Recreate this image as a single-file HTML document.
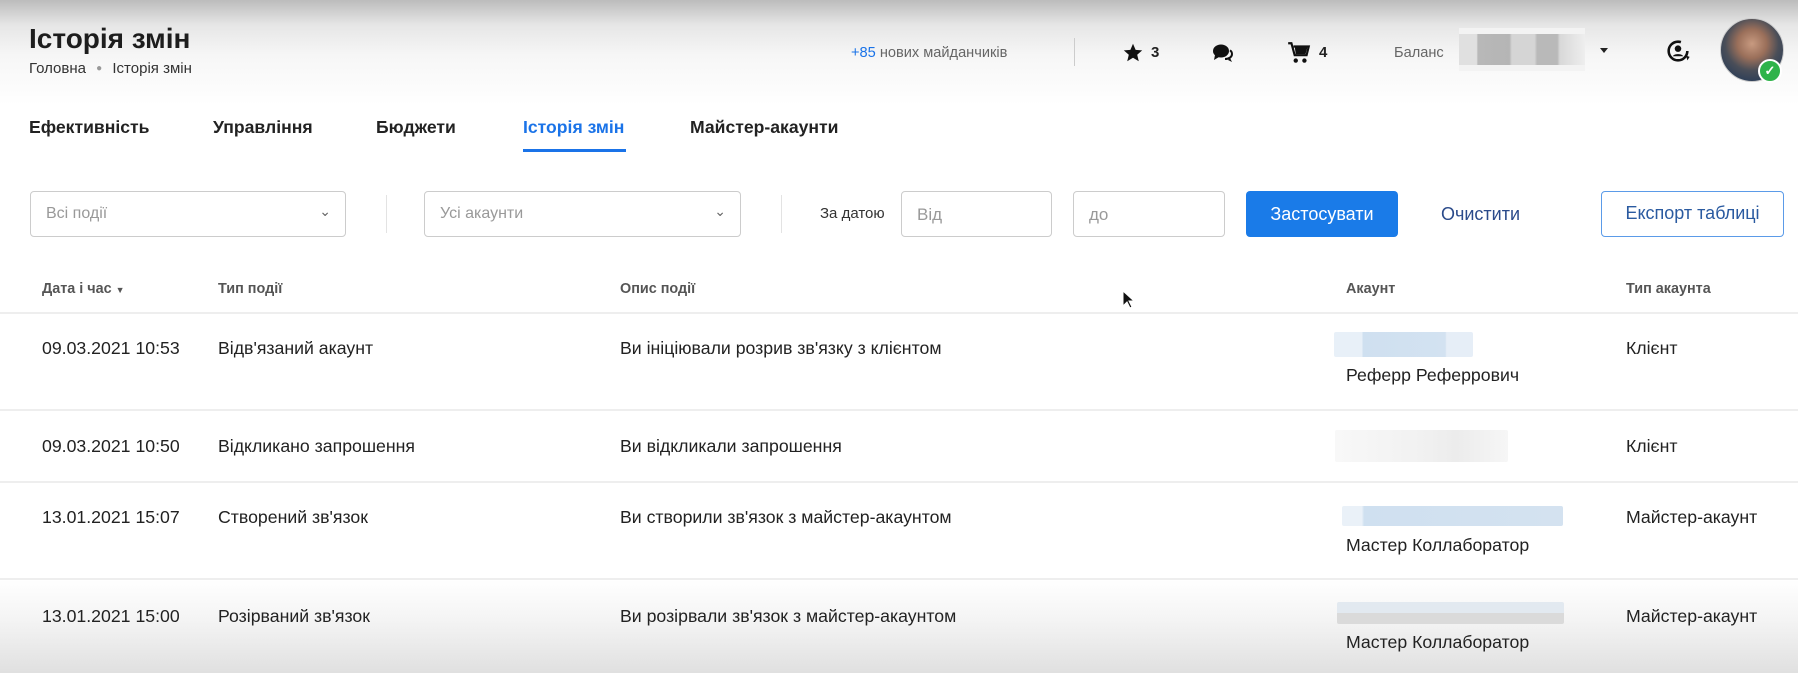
<!DOCTYPE html>
<html><head><meta charset="utf-8"><style>
*{margin:0;padding:0;box-sizing:border-box}
body{width:1798px;height:673px;overflow:hidden;position:relative;font-family:"Liberation Sans",sans-serif;color:#222;background:#fff}
.a{position:absolute;white-space:nowrap}
.topg{position:absolute;left:0;top:0;width:1798px;height:110px;background:linear-gradient(#bcbcbc 0,#e6e6e6 25px,#f6f6f6 55px,#fff 105px)}
.botg{position:absolute;left:0;top:580px;width:1798px;height:93px;background:linear-gradient(#fff 0,#f4f4f4 40px,#e0e0e0 93px)}
.tab{font-size:17.6px;font-weight:bold;top:117px}
.box{position:absolute;border:1px solid #ccc;border-radius:4px;background:#fff;top:191px;height:46px;font-size:16px;color:#999;padding:13px 15px 0}
.hd{font-size:14.4px;font-weight:bold;color:#555;top:281px}
.c{font-size:17.7px;color:#222}
.ln{position:absolute;left:0;width:1798px;height:2px;background:#eee}
.blur{position:absolute;border-radius:2px}
</style></head><body>
<div class="topg"></div>
<div class="botg"></div>
<div class="a" style="left:29px;top:23px;font-size:28px;font-weight:bold;color:#1d1d1d">Історія змін</div>
<div class="a" style="left:29px;top:60px;font-size:15px;color:#333">Головна <span style="color:#999;font-size:10px;margin:0 6px;vertical-align:2px">●</span> Історія змін</div>
<div class="a" style="left:851px;top:45px;font-size:14.6px;color:#666"><span style="color:#1a73e8">+85</span> нових майданчиків</div>
<div class="a" style="left:1074px;top:38px;width:1px;height:28px;background:#ccc"></div>
<svg class="a" style="left:1122px;top:42px" width="22" height="21" viewBox="0 0 24 24"><path d="M12 2l3 7 7.5.6-5.7 5 1.8 7.4L12 18l-6.6 4 1.8-7.4-5.7-5L9 9z" fill="#111"/></svg>
<div class="a" style="left:1151px;top:44px;font-size:15px;font-weight:bold">3</div>
<svg class="a" style="left:1211px;top:41px" width="24" height="24" viewBox="0 0 24 24"><ellipse cx="10" cy="10" rx="8" ry="6.5" fill="#111"/><path d="M4 14l-1 5 5-3z" fill="#111"/><path d="M14 18c4 0 7-2 7-5 0-1.5-.7-2.8-2-3.7" stroke="#111" stroke-width="2" fill="none"/><path d="M19 17l2 4-4-2z" fill="#111"/></svg>
<svg class="a" style="left:1286px;top:40px" width="26" height="26" viewBox="0 0 24 24"><path d="M2 3h3l3 11h11l2-8H7" stroke="#111" stroke-width="2" fill="none"/><path d="M8 6h12l-2 7H9z" fill="#111"/><circle cx="9" cy="19" r="2" fill="#111"/><circle cx="17" cy="19" r="2" fill="#111"/></svg>
<div class="a" style="left:1319px;top:44px;font-size:15px;font-weight:bold">4</div>
<div class="a" style="left:1394px;top:45px;font-size:14.6px;color:#666">Баланс</div>
<div class="a" style="left:1459px;top:28px;width:126px;height:43px;background:#f3f3f3"></div>
<div class="a" style="left:1459px;top:34px;width:126px;height:31px;background:linear-gradient(90deg,#e0e0e0 0,#e0e0e0 14%,#b8b8b8 15%,#b5b5b5 40%,#d5d5d5 42%,#d5d5d5 60%,#b9b9b9 62%,#b9b9b9 78%,#d8d8d8 80%,#eee 100%)"></div>
<div class="a" style="left:1600px;top:48px;border:4px solid transparent;border-top:5px solid #222"></div>
<svg class="a" style="left:1664px;top:37px" width="28" height="28" viewBox="0 0 24 24"><circle cx="12" cy="12" r="8" stroke="#111" stroke-width="2.2" fill="none" stroke-dasharray="40 10"/><circle cx="12" cy="10" r="2.8" fill="#111"/><path d="M7.5 16.5c1-2.5 8-2.5 9 0" fill="#111"/><path d="M19 16l3 1-2 3z" fill="#111"/></svg>
<div class="a" style="left:1720px;top:18px;width:64px;height:64px;border-radius:50%;background:radial-gradient(circle at 50% 40%,#c89a80 0,#9a6f5a 30%,#4a4e58 55%,#2c3e58 80%);border:1px solid #ccc"></div>
<div class="a" style="left:1758px;top:59px;width:24px;height:24px;border-radius:50%;background:#2fb34a;border:2px solid #fff;color:#fff;font-size:13px;text-align:center;line-height:20px;font-weight:bold">✓</div>
<div class="a tab" style="left:29px">Ефективність</div>
<div class="a tab" style="left:213px">Управління</div>
<div class="a tab" style="left:376px">Бюджети</div>
<div class="a tab" style="left:523px;color:#1a73e8">Історія змін</div>
<div class="a" style="left:523px;top:149px;width:103px;height:3px;background:#1a73e8"></div>
<div class="a tab" style="left:690px">Майстер-акаунти</div>
<div class="box" style="left:30px;width:316px">Всі події<span style="position:absolute;right:14px;top:11px;color:#666;font-size:14px">⌄</span></div>
<div class="a" style="left:386px;top:195px;width:1px;height:38px;background:#e3e3e3"></div>
<div class="box" style="left:424px;width:317px">Усі акаунти<span style="position:absolute;right:14px;top:11px;color:#666;font-size:14px">⌄</span></div>
<div class="a" style="left:781px;top:195px;width:1px;height:38px;background:#e3e3e3"></div>
<div class="a" style="left:820px;top:205px;font-size:15px;color:#333">За датою</div>
<div class="box" style="left:901px;width:151px;font-size:17px">Від</div>
<div class="box" style="left:1073px;width:152px;font-size:17px">до</div>
<div class="a" style="left:1246px;top:191px;width:152px;height:46px;background:#1a7be8;border-radius:4px;color:#fff;font-size:18px;text-align:center;line-height:46px">Застосувати</div>
<div class="a" style="left:1441px;top:204px;font-size:18px;color:#2a4a8a">Очистити</div>
<div class="a" style="left:1601px;top:191px;width:183px;height:46px;border:1.5px solid #5b9be8;border-radius:4px;color:#2a5aa0;font-size:18px;text-align:center;line-height:43px">Експорт таблиці</div>
<div class="a hd" style="left:42px">Дата і час <span style="font-size:9px">▼</span></div>
<div class="a hd" style="left:218px">Тип події</div>
<div class="a hd" style="left:620px">Опис події</div>
<div class="a hd" style="left:1346px">Акаунт</div>
<div class="a hd" style="left:1626px">Тип акаунта</div>
<svg class="a" style="left:1122px;top:290px" width="14" height="20" viewBox="0 0 14 20"><path d="M1 1v15l4-4 3 6 2-1-3-6h5z" fill="#111" stroke="#fff" stroke-width="1"/></svg>
<div class="ln" style="top:312px"></div>
<div class="a c" style="left:42px;top:338px">09.03.2021 10:53</div>
<div class="a c" style="left:218px;top:338px">Відв'язаний акаунт</div>
<div class="a c" style="left:620px;top:338px">Ви ініціювали розрив зв'язку з клієнтом</div>
<div class="blur" style="left:1334px;top:332px;width:139px;height:25px;background:linear-gradient(90deg,#e8f0f8 0,#e8f0f8 20%,#cfe0f0 21%,#d3e2f1 80%,#e6eef7 81%)"></div>
<div class="a c" style="left:1346px;top:365px">Реферр Реферрович</div>
<div class="a c" style="left:1626px;top:338px">Клієнт</div>
<div class="ln" style="top:409px"></div>
<div class="a c" style="left:42px;top:436px">09.03.2021 10:50</div>
<div class="a c" style="left:218px;top:436px">Відкликано запрошення</div>
<div class="a c" style="left:620px;top:436px">Ви відкликали запрошення</div>
<div class="blur" style="left:1335px;top:430px;width:173px;height:32px;background:linear-gradient(90deg,#f8f8f8,#f1f1f1 50%,#ececec 70%,#f6f6f6)"></div>
<div class="a c" style="left:1626px;top:436px">Клієнт</div>
<div class="ln" style="top:481px"></div>
<div class="a c" style="left:42px;top:507px">13.01.2021 15:07</div>
<div class="a c" style="left:218px;top:507px">Створений зв'язок</div>
<div class="a c" style="left:620px;top:507px">Ви створили зв'язок з майстер-акаунтом</div>
<div class="blur" style="left:1342px;top:506px;width:221px;height:20px;background:linear-gradient(90deg,#eaf1f8 0,#eaf1f8 9%,#cfe0f0 10%,#d4e2f0 100%)"></div>
<div class="a c" style="left:1346px;top:535px">Мастер Коллаборатор</div>
<div class="a c" style="left:1626px;top:507px">Майстер-акаунт</div>
<div class="ln" style="top:578px"></div>
<div class="a c" style="left:42px;top:606px">13.01.2021 15:00</div>
<div class="a c" style="left:218px;top:606px">Розірваний зв'язок</div>
<div class="a c" style="left:620px;top:606px">Ви розірвали зв'язок з майстер-акаунтом</div>
<div class="blur" style="left:1337px;top:602px;width:227px;height:22px;background:linear-gradient(#e2e9f0 50%,#dadada 51%)"></div>
<div class="a c" style="left:1346px;top:632px">Мастер Коллаборатор</div>
<div class="a c" style="left:1626px;top:606px">Майстер-акаунт</div>
</body></html>
